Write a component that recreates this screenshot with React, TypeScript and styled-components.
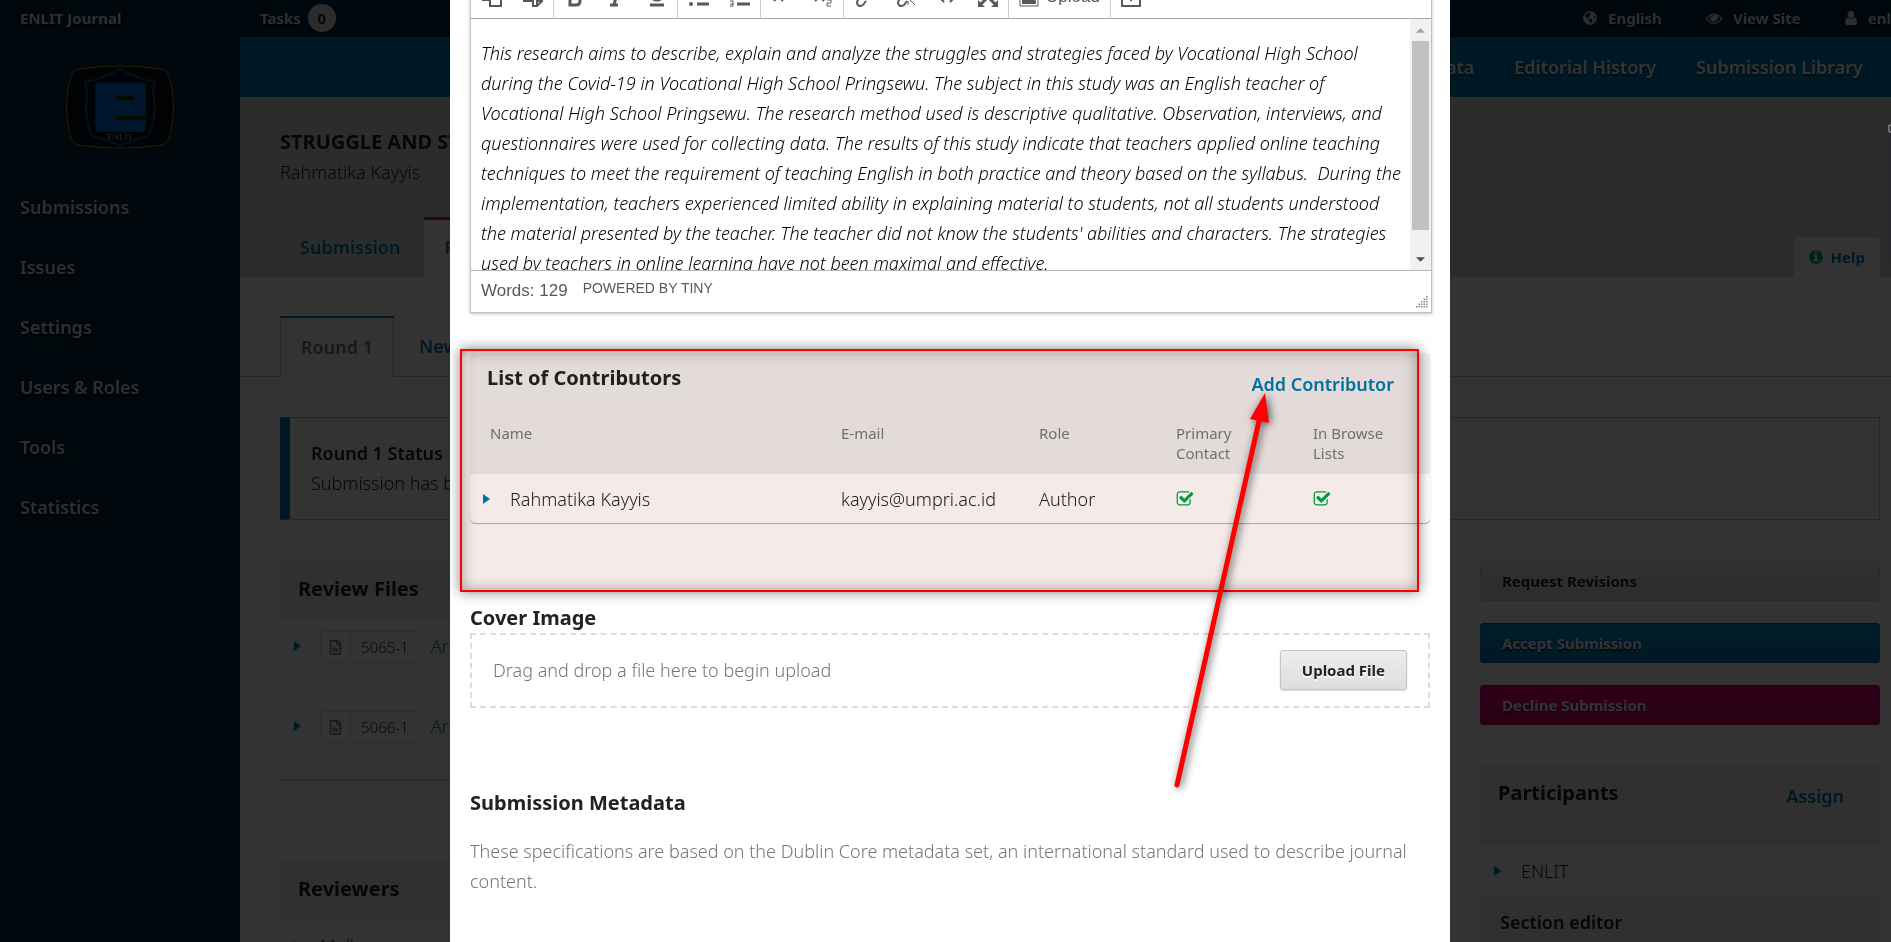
import React from 'react';
import styled, { createGlobalStyle, css } from 'styled-components';
import { FaGlobeAmericas, FaRegFileWord } from 'react-icons/fa';

const BLUE = '#007ab2';
const NAVY = '#002c40';
const MAGENTA = '#d00a6c';

const GlobalStyle = createGlobalStyle`
  *, *::before, *::after { box-sizing: border-box; }
  html, body { margin: 0; padding: 0; }
  body {
    font-family: "Noto Sans", "Open Sans", sans-serif;
    font-size: 18px;
    font-weight: 340;
    line-height: 30px;
    color: #222;
    background: #fff;
    overflow: hidden;
  }
  h1, h2, h3, p, ul { margin: 0; padding: 0; }
  ul { list-style: none; }
  a { color: ${BLUE}; text-decoration: none; }
  button { font-family: inherit; cursor: pointer; }
`;

/* ---------- shell ---------- */

const Viewport = styled.div`
  height: 100vh;
  overflow: hidden;
  position: relative;
`;

const Shell = styled.div`
  width: calc(100% + 9px);
  height: 100%;
  position: relative;
  display: grid;
  grid-template-columns: 240px 1fr;
  grid-template-rows: 37px 1fr;
`;

const TopBar = styled.header`
  grid-column: 1 / 3;
  display: grid;
  grid-template-columns: 240px 1fr auto;
  align-items: center;
  padding-bottom: 2px;
  background: ${NAVY};
  color: #e6e6e6;
  font-size: 15px;
  font-weight: 700;
  text-shadow: 0 2px 1px #000;
  a { color: inherit; }
`;

const SiteName = styled.a`
  padding-left: 20px;
`;

const Tasks = styled.a`
  display: flex;
  align-items: center;
  gap: 7px;
  padding-left: 20px;
`;

const TaskCount = styled.span`
  width: 28px;
  height: 28px;
  border-radius: 50%;
  background: #ddd;
  color: #222;
  text-shadow: none;
  line-height: 28px;
  text-align: center;
`;

const UserNav = styled.nav`
  display: flex;
  width: 317px;
  gap: 44px;
  white-space: nowrap;
  a { display: flex; align-items: center; gap: 11px; }
`;

const Sidebar = styled.aside`
  background: ${NAVY};
  padding-top: 28px;
`;

const LogoLink = styled.a`
  display: flex;
  justify-content: center;
  margin-bottom: 28px;
  svg { display: block; }
`;

const SideLink = styled.a`
  display: block;
  padding: 0 20px;
  line-height: 60px;
  font-weight: 600;
  color: #e6e6e6;
  text-shadow: 0 2px 1px #000;
`;

const Main = styled.main`
  min-width: 0;
  background: #fff;
`;

const WorkflowNav = styled.nav`
  display: flex;
  justify-content: flex-end;
  gap: 40px;
  padding-right: 37px;
  background: ${BLUE};
  a {
    color: #fff;
    line-height: 60px;
    font-weight: 600;
    text-shadow: 0 2px 1px rgba(0, 0, 0, 0.5);
  }
`;

const PageHeader = styled.div`
  background: #ddd;
  padding: 30px 20px 0 40px;
  h1 { font-size: 20px; line-height: 30px; font-weight: 700; white-space: nowrap; }
`;

const TabRow = styled.div`
  display: flex;
  justify-content: space-between;
  align-items: flex-end;
  margin-top: 30px;
`;

const Tabs = styled.nav`
  display: flex;
`;

const Tab = styled.a<{ $active?: boolean }>`
  height: 60px;
  padding: 0 24px 0 20px;
  line-height: 60px;
  font-weight: 600;
  ${(p) =>
    p.$active &&
    css`
      background: #fff;
      color: #666;
      border-top: 3px solid ${MAGENTA};
      border-radius: 2px 2px 0 0;
      line-height: 54px;
    `}
`;

const HelpTab = styled.a`
  display: flex;
  align-items: center;
  gap: 7px;
  height: 40px;
  padding: 0 15px 0 14px;
  background: #fff;
  border-radius: 3px 3px 0 0;
  font-size: 15px;
  font-weight: 700;
  svg { color: #00b24e; }
`;

const RoundTabs = styled.nav`
  display: flex;
  padding: 39px 0 0 40px;
  border-bottom: 1px solid #bbb;
  white-space: nowrap;
`;

const RoundTab = styled.a<{ $active?: boolean }>`
  height: 60px;
  padding: 0 25px;
  line-height: 60px;
  font-weight: 600;
  ${(p) =>
    p.$active &&
    css`
      width: 114px;
      height: 61px;
      margin-bottom: -1px;
      padding: 0;
      text-align: center;
      background: #fff;
      color: #777;
      border: 1px solid #bbb;
      border-width: 2px 1px 0;
      border-top-color: ${BLUE};
      line-height: 58px;
    `}
`;

const Body = styled.div`
  padding: 40px 20px 0 40px;
`;

const StatusBox = styled.section`
  border: 1px solid #bbb;
  border-left: 10px solid ${BLUE};
  padding: 20px 21px 21px;
  h3 { font-size: 18px; line-height: 30px; font-weight: 600; }
`;

const Columns = styled.div`
  display: grid;
  grid-template-columns: 1fr 400px;
  gap: 40px;
`;

const MainColumn = styled.div`
  display: grid;
  gap: 80px;
  align-content: start;
  padding-top: 40px;
`;

const SideColumn = styled.div`
  padding-top: 41px;
`;

const Listing = styled.section`
  border-radius: 3px;
  box-shadow: 0 1px 1px rgba(0, 0, 0, 0.25), 0 0 1px rgba(0, 0, 0, 0.15);
`;

const ListingHeader = styled.div<{ $tall?: boolean }>`
  display: flex;
  justify-content: space-between;
  height: ${(p) => (p.$tall ? '82px' : '60px')};
  padding: ${(p) => (p.$tall ? '14px 36px 0 18px' : '14px 18px')};
  background: #eee;
  h2 { font-size: 20px; line-height: 30px; font-weight: 700; }
  a { padding-top: 3px; font-weight: 600; }
`;

const FileRow = styled.div`
  display: flex;
  align-items: flex-start;
  height: 80px;
  padding: 11px 14px;
  border-bottom: 1px solid #eee;
  > svg { margin: 10px 19px 0 0; }
`;

const FileChip = styled.span`
  display: flex;
  align-items: center;
  height: 32px;
  margin-right: 12px;
  border: 1px solid #ddd;
  border-radius: 3px;
  font-size: 15px;
  svg { width: 29px; color: #777; }
  span { padding: 0 9px 0 10px; border-left: 1px solid #ddd; }
`;

const Decision = styled.button<{ $tone: 'plain' | 'primary' | 'danger' }>`
  display: block;
  width: 100%;
  height: 40px;
  margin-bottom: 22px;
  padding: 0 21px;
  border-radius: 3px;
  text-align: left;
  font-size: 15px;
  font-weight: 700;
  ${(p) =>
    p.$tone === 'plain' &&
    css`
      color: #222;
      border: 1px solid #d0d0d0;
      background: linear-gradient(#eee, #ddd);
      text-shadow: 0 1px 0 #fff;
    `}
  ${(p) =>
    p.$tone === 'primary' &&
    css`
      color: #fff;
      border: 1px solid #006a9c;
      background: linear-gradient(#0090d0, ${BLUE});
      text-shadow: 0 2px 1px rgba(0, 0, 0, 0.5);
    `}
  ${(p) =>
    p.$tone === 'danger' &&
    css`
      color: #fff;
      border: 1px solid #b8005c;
      background: linear-gradient(#f00078, #c80060);
      text-shadow: 0 2px 1px rgba(0, 0, 0, 0.5);
    `}
`;

const Participants = styled(Listing)`
  margin-top: 39px;
`;

const PersonRow = styled.div`
  display: flex;
  align-items: center;
  height: 49px;
  padding: 0 14px;
  gap: 20px;
`;

const RoleRow = styled.div`
  padding: 12px 20px;
  background: #eee;
  font-size: 18px;
  font-weight: 600;
`;

/* ---------- modal ---------- */

const Backdrop = styled.div`
  position: absolute;
  inset: 0;
  overflow: hidden;
  background: rgba(0, 0, 0, 0.8);
`;

const Modal = styled.div`
  max-width: 1000px;
  min-height: calc(100% + 24px);
  margin: -24px auto 0;
  padding: 0 20px 80px;
  background: #fff;
`;

const Editor = styled.div`
  margin-right: -2px;
  border: 1px solid #c0c0c0;
  border-top: 0;
  box-shadow: 0 1px 3px rgba(0, 0, 0, 0.25);
`;

const Toolbar = styled.div`
  display: flex;
  height: 43px;
  border-bottom: 1px solid #a8a8a8;
`;

const ToolGroup = styled.div`
  display: flex;
  & + & { border-left: 1px solid #d0d0d0; }
`;

const Tool = styled.button`
  display: flex;
  align-items: center;
  justify-content: center;
  gap: 7px;
  min-width: 41px;
  padding: 0 10px;
  border: 0;
  background: none;
  color: #595959;
  font: 17px/20px "Liberation Sans", Arial, sans-serif;
  svg { display: block; flex: none; }
`;

const EditorArea = styled.div`
  display: flex;
  height: 251px;
  overflow: hidden;
`;

const Abstract = styled.p`
  flex: 1;
  min-width: 0;
  padding: 19px 0 0 10px;
  font-style: italic;
  font-weight: 300;
  color: #000;
  white-space: pre;
`;

const ScrollBar = styled.div`
  display: flex;
  flex-direction: column;
  align-items: center;
  width: 21px;
  padding: 0 2px;
  background: #f1f1f1;
  svg { display: block; margin: 9px 0 8px; }
`;

const ScrollThumb = styled.div`
  width: 100%;
  height: 189px;
  background: #c1c1c1;
`;

const ScrollGap = styled.div`
  flex: 1;
`;

const EditorStatus = styled.div`
  display: flex;
  align-items: flex-start;
  gap: 15px;
  height: 42px;
  padding: 10px 3px 3px 10px;
  border-top: 1px solid #b8b8b8;
  color: #595959;
  font: 17px/20px "Liberation Sans", Arial, sans-serif;
  svg { align-self: flex-end; margin-left: auto; }
`;

const Powered = styled.a`
  color: inherit;
  font-size: 14px;
  line-height: 15px;
`;

const Contributors = styled.section`
  position: relative;
  margin-top: 40px;
`;

const ContributorPanel = styled.div`
  border-radius: 5px;
  overflow: hidden;
  box-shadow: 0 1px 1px rgba(0, 0, 0, 0.3), 0 0 1px rgba(0, 0, 0, 0.15);
`;

const PanelTitle = styled.div`
  display: flex;
  justify-content: space-between;
  align-items: flex-start;
  height: 60px;
  padding: 10px 36px 0 17px;
  background: #eee;
  h2 { font-size: 20px; line-height: 30px; font-weight: 700; }
  a { padding-top: 6px; font-weight: 600; }
`;

const Table = styled.table`
  width: 100%;
  table-layout: fixed;
  border-collapse: collapse;
  text-align: left;
  vertical-align: top;
  th {
    padding: 10px 20px 11px;
    background: #eee;
    color: #777;
    font-size: 15px;
    line-height: 20px;
    font-weight: 400;
    vertical-align: top;
  }
  td { padding: 10px 20px 9px; }
  td:first-child { padding-left: 13px; }
  td svg { display: block; }
`;

const NameCell = styled.div`
  display: flex;
  align-items: center;
  gap: 20px;
`;

const Highlight = styled.div`
  position: absolute;
  inset: -4px 11px -69px -10px;
  border: 2px solid #f00;
  box-shadow: 0 0 12px rgba(0, 0, 0, 0.5), inset 0 0 14px rgba(0, 0, 0, 0.35);
  pointer-events: none;
`;

const HighlightTint = styled.div`
  position: absolute;
  inset: -2px 13px -67px -8px;
  background: #f4ebe9;
  mix-blend-mode: multiply;
  pointer-events: none;
`;

const Pointer = styled.svg`
  position: absolute;
  top: 30px;
  left: 690px;
  pointer-events: none;
  filter: drop-shadow(2px 1px 4px rgba(0, 0, 0, 0.65));
`;

const SectionTitle = styled.h2`
  margin-top: 80px;
  font-size: 20px;
  line-height: 30px;
  font-weight: 700;
`;

const DropZone = styled.div`
  display: flex;
  align-items: center;
  justify-content: space-between;
  padding: 15px 21px 16px;
  border: 2px dashed #ddd;
  color: #777;
`;

const UploadButton = styled.button`
  height: 40px;
  padding: 0 21px;
  border: 1px solid #c4c4c4;
  border-radius: 3px;
  background: linear-gradient(#eee, #ddd);
  box-shadow: 0 1px 2px rgba(0, 0, 0, 0.15);
  color: #222;
  font-size: 15px;
  font-weight: 700;
  text-shadow: 0 2px 0 #fff;
`;

const Description = styled.p`
  margin-top: 18px;
  color: #777;
`;

const SideWidget = styled.div`
  position: absolute;
  top: 124px;
  right: 0;
  width: 3px;
  height: 140px;
  background: #27292c;
  svg { display: block; }
`;

/* ---------- drawings ---------- */

const icons = {
  check: {
    box: '0 0 1792 1792',
    d: 'M1472 930v318q0 119-84.500 203.500t-203.500 84.500h-832q-119 0-203.500-84.500t-84.500-203.500v-832q0-119 84.500-203.500t203.500-84.500h832q63 0 117 25 15 7 18 23 3 17-9 29l-49 49q-10 10-23 10-3 0-9-2-23-6-45-6h-832q-66 0-113 47t-47 113v832q0 66 47 113t113 47h832q66 0 113-47t47-113v-254q0-13 9-22l64-64q10-10 23-10 6 0 12 3 20 8 20 29zm231-489l-814 814q-24 24-57 24t-57-24l-430-430q-24-24-24-57t24-57l110-110q24-24 57-24t57 24l263 263 647-647q24-24 57-24t57 24l110 110q24 24 24 57t-24 57z',
  },
  info: {
    box: '0 0 1792 1792',
    d: 'M1152 1376v-160q0-14-9-23t-23-9h-96v-512q0-14-9-23t-23-9h-320q-14 0-23 9t-9 23v160q0 14 9 23t23 9h96v320h-96q-14 0-23 9t-9 23v160q0 14 9 23t23 9h448q14 0 23-9t9-23zm-128-896v-160q0-14-9-23t-23-9h-192q-14 0-23 9t-9 23v160q0 14 9 23t23 9h192q14 0 23-9t9-23zm640 416q0 209-103 385.500t-279.500 279.500-385.500 103-385.500-103-279.500-279.500-103-385.500 103-385.500 279.500-279.500 385.500-103 385.500 103 279.500 279.500 103 385.500z',
  },
  eye: {
    box: '0 0 1792 1792',
    d: 'M1664 960q-152-236-381-353 61 104 61 225 0 185-131.500 316.500t-316.500 131.500-316.500-131.500-131.500-316.500q0-121 61-225-229 117-381 353 133 205 333.500 326.500t434.500 121.500 434.500-121.500 333.500-326.500zm-720-384q0-20-14-34t-34-14q-125 0-214.500 89.500t-89.500 214.500q0 20 14 34t34 14 34-14 14-34q0-86 61-147t147-61q20 0 34-14t14-34zm848 384q0 34-20 69-140 230-376.500 368.500t-499.500 138.500-499.500-139-376.500-368q-20-35-20-69t20-69q140-229 376.500-368t499.500-139 499.500 139 376.500 368q20 35 20 69z',
  },
  user: {
    box: '256 128 1280 1536',
    d: 'M1536 1399q0 109-62.500 187t-150.500 78h-854q-88 0-150.500-78t-62.500-187q0-85 8.500-160.500t31.500-152 58.500-131 94-89 134.500-34.500q131 128 313 128t313-128q76 0 134.500 34.500t94 89 58.500 131 31.500 152 8.500 160.500zm-256-887q0 159-112.500 271.500t-271.500 112.500-271.500-112.500-112.500-271.500 112.500-271.500 271.500-112.500 271.500 112.500 112.500 271.500z',
  },
};

type GlyphProps = { name: keyof typeof icons; width?: number; height?: number; color?: string };

const Glyph = ({ name, width = 16, height = width, color = 'currentColor' }: GlyphProps) => (
  <svg width={width} height={height} viewBox={icons[name].box} fill={color} aria-hidden="true">
    <path d={icons[name].d} />
  </svg>
);

const Caret = () => (
  <svg width="7" height="10" viewBox="0 0 7 10" fill={BLUE} aria-hidden="true">
    <path d="M0 0l7 5-7 5z" />
  </svg>
);

const ToolIcon = ({ children }: { children: React.ReactNode }) => (
  <svg width="20" height="20" viewBox="0 0 20 20" fill="none" stroke="#595959" strokeWidth="2" aria-hidden="true">
    {children}
  </svg>
);

const Logo = () => (
  <svg width="110" height="84" viewBox="0 0 110 84" role="img" aria-label="ENLIT">
    <path
      d="M14 4Q55-2 96 4Q103 6 105 14Q112 42 105 70Q103 78 96 80Q55 86 14 80Q7 78 5 70Q-2 42 5 14Q7 6 14 4Z"
      fill="#000a12"
      stroke="#c89600"
    />
    <path
      d="M55 4Q70 13 90 17Q87 26 90 40Q89 62 82 71Q66 76 55 81Q44 76 28 71Q21 62 21 40Q23 26 20 17Q40 13 55 4Z"
      fill="#001020"
      stroke="#144c8c"
      strokeWidth="2"
    />
    <rect x="30" y="17" width="51" height="50" rx="3" fill="#0070dc" stroke="#1c2c00" />
    <rect x="51" y="31" width="18" height="4" fill="#2a3400" />
    <rect x="51" y="51" width="30" height="4" fill="#2a3400" />
    <text x="55" y="75" textAnchor="middle" fontFamily="Liberation Serif, serif" fontSize="9" fill="#a8b0c0">
      ENLIT
    </text>
  </svg>
);

const abstractText =
  "This research aims to describe, explain and analyze the struggles and strategies faced by Vocational High School\nduring the Covid-19 in Vocational High School Pringsewu. The subject in this study was an English teacher of\nVocational High School Pringsewu. The research method used is descriptive qualitative. Observation, interviews, and\nquestionnaires were used for collecting data. The results of this study indicate that teachers applied online teaching\ntechniques to meet the requirement of teaching English in both practice and theory based on the syllabus.\u00a0 During the\nimplementation, teachers experienced limited ability in explaining material to students, not all students understood\nthe material presented by the teacher. The teacher did not know the students' abilities and characters. The strategies\nused by teachers in online learning have not been maximal and effective.";

const sideItems = ['Submissions', 'Issues', 'Settings', 'Users & Roles', 'Tools', 'Statistics'];

const EditorToolbar = () => (
  <Toolbar>
    <ToolGroup>
      <Tool aria-label="Copy">
        <ToolIcon><path d="M8 7h11v12H8zM8 13H1V1h12v6" /></ToolIcon>
      </Tool>
      <Tool aria-label="Paste">
        <ToolIcon>
          <path d="M1 3h13v4H9v7H1z" fill="#595959" />
          <path d="M10 8h9v6l-5 5h-4zM14 19v-5h5" />
        </ToolIcon>
      </Tool>
    </ToolGroup>
    <ToolGroup>
      <Tool aria-label="Bold">
        <ToolIcon><path d="M5 3h5q4 0 4 4t-4 3H5zM5 10h6q4 0 4 4t-4 4H5z" strokeWidth="3" /></ToolIcon>
      </Tool>
      <Tool aria-label="Italic">
        <ToolIcon><path d="M8 2h8M4 18h8M12 2L8 18" strokeWidth="3" /></ToolIcon>
      </Tool>
      <Tool aria-label="Underline">
        <ToolIcon><path d="M5 1v7q0 5 5 5t5-5V1M3 18h14" strokeWidth="3" /></ToolIcon>
      </Tool>
    </ToolGroup>
    <ToolGroup>
      <Tool aria-label="Bulleted list">
        <ToolIcon>
          <path d="M8 4h12M8 10h12M8 17h12" strokeWidth="3" />
          <g fill="#595959" stroke="none"><circle cx="2" cy="4" r="2" /><circle cx="2" cy="10" r="2" /><circle cx="2" cy="17" r="2" /></g>
        </ToolIcon>
      </Tool>
      <Tool aria-label="Numbered list">
        <ToolIcon>
          <path d="M7 4h13M7 10h13M7 17h13" strokeWidth="3" />
          <path d="M0 14h3v5H0M0 17h3M2 1v6" strokeWidth="1" />
        </ToolIcon>
      </Tool>
    </ToolGroup>
    <ToolGroup>
      <Tool aria-label="Superscript">
        <ToolIcon><path d="M2 5l9 9M11 5l-9 9" /><path d="M14 1h4v3h-4v3h4" strokeWidth="1" /></ToolIcon>
      </Tool>
      <Tool aria-label="Subscript">
        <ToolIcon><path d="M2 5l9 9M11 5l-9 9" /><path d="M14 13h4v3h-4v3h4" strokeWidth="1" /></ToolIcon>
      </Tool>
    </ToolGroup>
    <ToolGroup>
      <Tool aria-label="Insert link">
        <ToolIcon><path d="M8 12L15 5M9 6l4-4q3-2 5 0t0 5l-4 4M7 9l-4 4q-2 3 0 5t5 0l3-4" /></ToolIcon>
      </Tool>
      <Tool aria-label="Remove link">
        <ToolIcon>
          <path d="M9 6l4-4q3-2 5 0t0 5M7 9l-4 4q-2 3 0 5t5 0l3-4" />
          <path d="M12 14v4M14 13l5 5" strokeWidth="1" />
        </ToolIcon>
      </Tool>
      <Tool aria-label="Source code">
        <ToolIcon><path d="M7 5l-5 5 5 5M13 5l5 5-5 5" /></ToolIcon>
      </Tool>
      <Tool aria-label="Fullscreen">
        <ToolIcon>
          <path d="M3 3l14 14M17 3L3 17" strokeWidth="3" />
          <path d="M0 0h7L0 7zM20 0v7l-7-7zM0 20v-7l7 7zM20 20h-7l7-7z" fill="#595959" stroke="none" />
        </ToolIcon>
      </Tool>
    </ToolGroup>
    <ToolGroup>
      <Tool>
        <ToolIcon>
          <path d="M1 3h18v16H1z" strokeWidth="1" />
          <path d="M3 17v-5l4-4 4 4 3-2 3 4v3z" fill="#595959" stroke="none" />
        </ToolIcon>
        Upload
      </Tool>
    </ToolGroup>
    <ToolGroup>
      <Tool aria-label="Insert tag">
        <ToolIcon><path d="M1 1h18v18H1zM10 5v9M6 10h8" /></ToolIcon>
      </Tool>
    </ToolGroup>
  </Toolbar>
);

export default function App() {
  return (
    <Viewport>
      <GlobalStyle />
      <Shell>
        <TopBar>
          <SiteName href="#">ENLIT Journal</SiteName>
          <Tasks href="#">
            Tasks <TaskCount>0</TaskCount>
          </Tasks>
          <UserNav>
            <a href="#"><FaGlobeAmericas size={14} /> English</a>
            <a href="#"><Glyph name="eye" /> View Site</a>
            <a href="#"><Glyph name="user" width={12} height={14} /> enlit</a>
          </UserNav>
        </TopBar>
        <Sidebar>
          <LogoLink href="#"><Logo /></LogoLink>
          <nav>
            {sideItems.map((item) => (
              <SideLink href="#" key={item}>{item}</SideLink>
            ))}
          </nav>
        </Sidebar>
        <Main>
          <WorkflowNav>
            <a href="#">Metadata</a>
            <a href="#">Editorial History</a>
            <a href="#">Submission Library</a>
          </WorkflowNav>
          <PageHeader>
            <h1>STRUGGLE AND STRATEGIES</h1>
            <p>Rahmatika Kayyis</p>
            <TabRow>
              <Tabs>
                <Tab href="#">Submission</Tab>
                <Tab href="#" $active>Review</Tab>
              </Tabs>
              <HelpTab href="#"><Glyph name="info" /> Help</HelpTab>
            </TabRow>
          </PageHeader>
          <RoundTabs>
            <RoundTab href="#" $active>Round 1</RoundTab>
            <RoundTab href="#">New Review Round</RoundTab>
          </RoundTabs>
          <Body>
            <StatusBox>
              <h3>Round 1 Status</h3>
              <p>Submission has been accepted.</p>
            </StatusBox>
            <Columns>
              <MainColumn>
                <Listing>
                  <ListingHeader><h2>Review Files</h2></ListingHeader>
                  {['5065-1', '5066-1'].map((id) => (
                    <FileRow key={id}>
                      <Caret />
                      <FileChip>
                        <FaRegFileWord size={15} />
                        <span>{id}</span>
                      </FileChip>
                      <a href="#">Article Text</a>
                    </FileRow>
                  ))}
                </Listing>
                <Listing>
                  <ListingHeader><h2>Reviewers</h2></ListingHeader>
                  <FileRow>
                    <Caret />
                    <p>Melly</p>
                  </FileRow>
                </Listing>
              </MainColumn>
              <SideColumn>
                <Decision $tone="plain">Request Revisions</Decision>
                <Decision $tone="primary">Accept Submission</Decision>
                <Decision $tone="danger">Decline Submission</Decision>
                <Participants>
                  <ListingHeader $tall>
                    <h2>Participants</h2>
                    <a href="#">Assign</a>
                  </ListingHeader>
                  <PersonRow><Caret /> ENLIT</PersonRow>
                  <RoleRow>Section editor</RoleRow>
                </Participants>
              </SideColumn>
            </Columns>
          </Body>
        </Main>

        <Backdrop>
          <Modal role="dialog" aria-label="Title and Abstract">
            <Editor>
              <EditorToolbar />
              <EditorArea>
                <Abstract>{abstractText}</Abstract>
                <ScrollBar>
                  <svg width="9" height="5" viewBox="0 0 10 5" fill="#a3a3a3"><path d="M0 5l5-5 5 5z" /></svg>
                  <ScrollThumb />
                  <ScrollGap />
                  <svg width="9" height="5" viewBox="0 0 10 5" fill="#505050"><path d="M0 0h10L5 5z" /></svg>
                </ScrollBar>
              </EditorArea>
              <EditorStatus>
                <span>Words: 129</span>
                <Powered href="#">POWERED BY TINY</Powered>
                <svg width="13" height="13" viewBox="0 0 26 26" fill="#888" aria-hidden="true">
                  {[0, 1, 2, 3, 4].map((r) =>
                    Array.from({ length: r + 1 }, (_, c) => (
                      <rect key={`${r}-${c}`} x={22 - c * 5} y={r * 5} width="3" height="3" />
                    ))
                  )}
                </svg>
              </EditorStatus>
            </Editor>

            <Contributors>
              <ContributorPanel>
                <PanelTitle>
                  <h2>List of Contributors</h2>
                  <a href="#">Add Contributor</a>
                </PanelTitle>
                <Table>
                  <colgroup>
                    <col />
                    <col width="198" />
                    <col width="137" />
                    <col width="137" />
                    <col width="137" />
                  </colgroup>
                  <thead>
                    <tr>
                      <th>Name</th>
                      <th>E-mail</th>
                      <th>Role</th>
                      <th>Primary Contact</th>
                      <th>In Browse Lists</th>
                    </tr>
                  </thead>
                  <tbody>
                    <tr>
                      <td><NameCell><Caret /> Rahmatika Kayyis</NameCell></td>
                      <td>kayyis@umpri.ac.id</td>
                      <td>Author</td>
                      <td><Glyph name="check" width={18} color="#00a846" /></td>
                      <td><Glyph name="check" width={18} color="#00a846" /></td>
                    </tr>
                  </tbody>
                </Table>
              </ContributorPanel>
              <HighlightTint />
              <Highlight />
              <Pointer width="130" height="420" viewBox="0 0 130 420" aria-hidden="true">
                <path d="M17 402L99 38" stroke="#f00" strokeWidth="5" strokeLinecap="round" />
                <path d="M105 10L90 36L109 40Z" fill="#f00" />
              </Pointer>
            </Contributors>

            <SectionTitle>Cover Image</SectionTitle>
            <DropZone>
              Drag and drop a file here to begin upload
              <UploadButton>Upload File</UploadButton>
            </DropZone>

            <SectionTitle>Submission Metadata</SectionTitle>
            <Description>
              These specifications are based on the Dublin Core metadata set, an international standard used to
              describe journal content.
            </Description>
          </Modal>
        </Backdrop>
      </Shell>
      <SideWidget>
        <svg width="3" height="9" fill="none" stroke="#aaa"><path d="M3 1H1v7h2" /></svg>
      </SideWidget>
    </Viewport>
  );
}
